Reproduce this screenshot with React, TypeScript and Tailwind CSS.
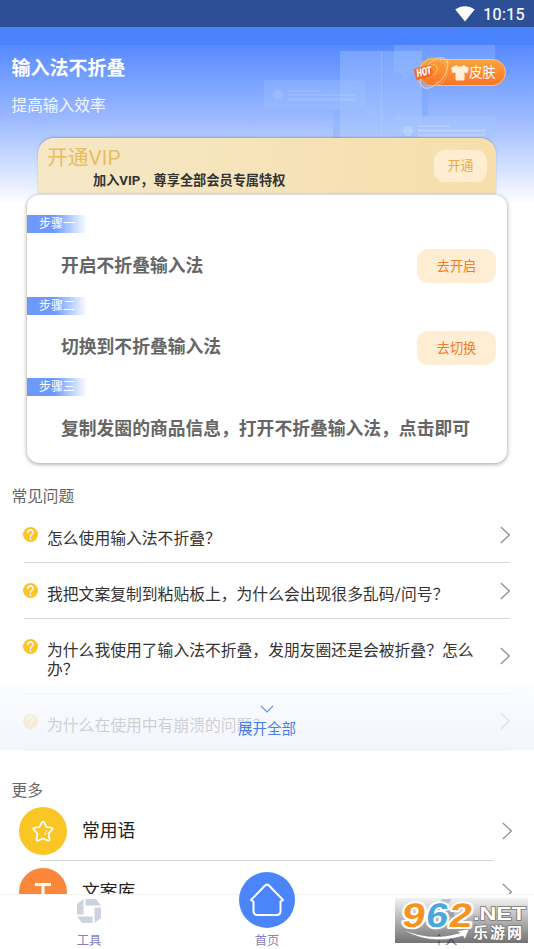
import type { ReactNode } from 'react';

interface Step {
  tag: string;
  title: string;
  action?: string;
}

const steps: Step[] = [
  { tag: '步骤一', title: '开启不折叠输入法', action: '去开启' },
  { tag: '步骤二', title: '切换到不折叠输入法', action: '去切换' },
  { tag: '步骤三', title: '复制发圈的商品信息，打开不折叠输入法，点击即可' },
];

const questions = [
  '怎么使用输入法不折叠？',
  '我把文案复制到粘贴板上，为什么会出现很多乱码/问号？',
  '为什么我使用了输入法不折叠，发朋友圈还是会被折叠？怎么办？',
  '为什么在使用中有崩溃的问题？',
];

function Chevron() {
  return (
    <svg className="w-[10px] h-[18px] shrink-0" viewBox="0 0 10 18" fill="none" stroke="#8c8c8c" strokeWidth={1.2}>
      <path d="M0.800 1l8.500 8-8.500 8" />
    </svg>
  );
}

function StatusBar() {
  return (
    <div className="h-[27px] bg-[#2d4f96] flex items-center justify-end pr-[9px] gap-[8px]">
      <svg className="w-[20px] h-[16px]" viewBox="0 0 20 16" fill="white">
        <path d="M0.3 3.6C6-1 14-1 19.7 3.6L10 15.6z" />
      </svg>
      <span className="text-white text-[16px] leading-[18px] tracking-[0.4px] pt-[2px] [-webkit-text-stroke:0.2px_white]">
        10:15
      </span>
    </div>
  );
}

function HeaderArt() {
  return (
    <svg className="absolute left-[260px] top-0 w-[240px] h-[94px]" viewBox="260 45 240 94">
      <path d="M333 109h7v30h-7z" fill="#8ab4ff" opacity={0.6} />
      <path d="M422 90h6v26h-6z" fill="#79a8ff" opacity={0.5} />
      <path d="M340 51h82v88h-82z" fill="#a5c6ff" opacity={0.4} />
      <path d="M381 51h1v88h-1z" fill="#c0d5ff" opacity={0.3} />
      <rect x="264" y="80" width="101" height="29" rx="2" fill="#9ec2ff" opacity={0.36} />
      <path d="M362 109l14 7v-7z" fill="#9ec2ff" opacity={0.25} />
      <path d="M394 45h101v28h-82l-10 7v-7h-9z" fill="#9ec2ff" opacity={0.3} />
      <rect x="394" y="116" width="101" height="26" rx="2" fill="#a2c5ff" opacity={0.5} />
      <g fill="#c3d7ff" opacity={0.22}>
        <circle cx="278" cy="95" r="5" />
        <path d="M288 90h32v2h-32zM288 94h68v2h-68zM288 98h68v3h-68z" />
      </g>
      <g fill="#cfdfff" opacity={0.4}>
        <circle cx="408" cy="131" r="5" />
        <path d="M418 125h32v2h-32zM418 129h68v3h-68zM418 134h68v3h-68z" />
      </g>
    </svg>
  );
}

function SkinButton() {
  return (
    <div className="absolute left-[413px] top-[11px] w-[94px] h-[34px]">
      <svg className="absolute inset-0 w-[94px] h-[34px]" viewBox="413 56 94 34" fill="none">
        <defs>
          <linearGradient id="pill" x1="0" y1="0" x2="0" y2="1">
            <stop offset="0" stopColor="#fca43c" />
            <stop offset="1" stopColor="#f97428" />
          </linearGradient>
        </defs>
        <rect x="421.5" y="59.5" width="84" height="26" rx="13" fill="url(#pill)" stroke="#ffc28a" />
        <circle cx="433" cy="72" r="14" fill="url(#pill)" stroke="#ffc070" strokeWidth={0.6} />
        <ellipse cx="434" cy="73" rx="18" ry="10" transform="rotate(-50 434 73)" stroke="#ffd3a0" strokeWidth={0.8} />
        <ellipse cx="432" cy="72" rx="17" ry="12" transform="rotate(-38 432 72)" stroke="#ffc987" strokeWidth={0.4} />
        <circle cx="447.500" cy="62" r="1" fill="#ffd9ae" />
        <path d="M431 64.500l4 0.500 2.500 4-2.500 5-3.500 1z" fill="#f98a2c" stroke="#ffd071" strokeWidth={0.8} />
        <path d="M413.500 69l17.500-4.500 2 10.500-16.500 5.500z" fill="#f46b2a" />
        <path d="M456.500 65c2 2 5 2 7 0l5.500 3-1.500 5-3-0.500V79q0 1.500-1.500 1.500h-6q-1.500 0-1.500-1.500v-6.500l-3 0.500-1.500-5z" fill="#fff0dc" />
      </svg>
      <span className="absolute left-[4px] top-[13px] text-white text-[11px] leading-[10px] font-black italic -rotate-12 scale-x-[0.7] origin-left whitespace-nowrap">
        HOT
      </span>
      <span className="absolute left-[56px] top-[8px] text-white text-[13.300px] leading-[18px]">皮肤</span>
    </div>
  );
}

function VipBanner() {
  return (
    <div className="relative mx-[38px] mt-[21px] h-[56px] rounded-t-[16px] bg-linear-to-r from-[#f5e8c7] to-[#f7deab] shadow-[0_-1px_2px_rgba(90,90,110,0.35)] flex items-start justify-between">
      <div className="pl-[9px] pt-[8px]">
        <div className="text-[20.800px] leading-[24px] text-[#e9bd60]">开通VIP</div>
        <div className="pl-[46px] pt-[1px] text-[13.200px] leading-[19px] font-bold text-[#333] whitespace-nowrap">
          加入VIP，尊享全部会员专属特权
        </div>
      </div>
      <button className="mt-[12px] mr-[9px] w-[53px] h-[32px] rounded-[11px] bg-[#feedd0] text-[13px] text-[#eeab45]">
        开通
      </button>
    </div>
  );
}

function StepsCard() {
  return (
    <div className="relative mx-[27px] w-[480px] h-[268px] pt-[20px] rounded-[12px] bg-white shadow-[0_1px_4px_rgba(0,0,0,0.4)]">
      {steps.map((step) => (
        <div key={step.tag} className="h-[81.700px]">
          <div className="w-[60px] h-[18px] pl-[12px] bg-linear-to-r from-[#6d99fb] from-45% to-white text-white text-[12px] leading-[18px]">
            {step.tag}
          </div>
          <div className="mt-[16px] h-[34px] pl-[34px] pr-[11px] flex items-center justify-between">
            <span className="text-[17.800px] leading-[24px] font-bold text-[#666] whitespace-nowrap -mt-[1px]">{step.title}</span>
            {step.action && (
              <button className="w-[79px] h-[34px] pt-[2px] rounded-[11px] bg-[#ffeed4] text-[13.200px] text-[#f07c25]">
                {step.action}
              </button>
            )}
          </div>
        </div>
      ))}
    </div>
  );
}

function QuestionIcon() {
  return (
    <svg className="self-start -ml-[1px] -mt-[3px] w-[15px] h-[15px] shrink-0" viewBox="0 0 15 15" fill="none">
      <circle cx="7.500" cy="7.500" r="7.500" fill="#fac42b" />
      <path d="M4.800 5.800C4.800 2 10.300 2.200 10.200 5.600 10.100 7.300 7.500 7.400 7.500 9.600" stroke="white" strokeWidth={1.400} strokeLinecap="round" />
      <circle cx="7.500" cy="11.900" r="0.900" fill="white" />
    </svg>
  );
}

function Faq() {
  return (
    <div className="relative">
      <div className="pl-[24px] pr-[24px]">
        {questions.map((question) => (
          <div key={question} className="pt-[23px] pb-[13.500px] border-b border-[#d8d8d8] flex items-center">
            <QuestionIcon />
            <p className="flex-1 pl-[9px] pr-[25px] text-[15.800px] leading-[18.500px] text-[#333]">{question}</p>
            <div className="-mt-[9px]">
              <Chevron />
            </div>
          </div>
        ))}
      </div>

      {/* Fade over the last question */}
      <div className="absolute left-0 right-0 bottom-0 h-[59px] bg-linear-to-b from-[#f9fbff]/80 to-[#eff3fc]/80 flex flex-col items-center pt-[14px]">
        <svg className="w-[14px] h-[9px]" viewBox="0 0 14 9" fill="none" stroke="#5f95ef" strokeWidth={1.1}>
          <path d="M1 1l6 6 6-6" />
        </svg>
        <span className="mt-[7px] text-[14.500px] leading-[18px] text-[#477eea]">展开全部</span>
      </div>
      <div className="absolute left-0 right-0 bottom-[59px] h-[10px] bg-linear-to-b from-transparent to-[#fafcff]" />
    </div>
  );
}

interface MoreItemProps {
  label: string;
  color: string;
  icon: ReactNode;
}

function MoreItem({ label, color, icon }: MoreItemProps) {
  return (
    <div className="h-[60px] pl-[19px] pr-[22px] flex items-start">
      <div className={`w-[48px] h-[48px] shrink-0 rounded-full flex items-center justify-center ${color}`}>{icon}</div>
      <div className="h-[48px] flex-1 pl-[15px] flex items-center justify-between">
        <span className="pt-[1px] text-[17.800px] leading-[24px] text-[#222]">{label}</span>
        <Chevron />
      </div>
    </div>
  );
}

function Watermark() {
  return (
    <div className="absolute left-[395px] top-[3px] w-[133px] h-[45px] bg-linear-to-b from-black/5 to-black/55">
      <svg className="w-[133px] h-[45px]" viewBox="0 0 133 45">
        <g fontFamily="Liberation Sans" fontWeight="bold" fontSize="34" strokeLinejoin="round" transform="skewX(-8)">
          <g stroke="white" strokeWidth={4} fill="white" aria-hidden="true">
            <text x="10" y="29" textLength="23" lengthAdjust="spacingAndGlyphs" fill="#f7931e" stroke="white" paintOrder="stroke">9</text>
            <text x="34" y="29" textLength="22" lengthAdjust="spacingAndGlyphs" fill="#4aa8df" stroke="white" paintOrder="stroke">6</text>
            <text x="57" y="29" textLength="23" lengthAdjust="spacingAndGlyphs" fill="#f7931e" stroke="white" paintOrder="stroke">2</text>
          </g>
        </g>
        <path d="M7 31q28 13 58 4l-3-2 12-2-4 10-2-3Q34 48 7 31z" fill="white" stroke="#888" strokeWidth={0.5} />
        <g fill="white" stroke="#777" strokeWidth={1.500} paintOrder="stroke" fontWeight="bold">
          <text x="78" y="22" fontSize="19" textLength="53" lengthAdjust="spacingAndGlyphs" fontFamily="Liberation Sans">.NET</text>
          <text x="78" y="40" fontSize="15" textLength="49" fontFamily="Noto Sans CJK SC">乐游网</text>
        </g>
      </svg>
    </div>
  );
}

function BottomNav() {
  return (
    <div className="absolute left-0 right-0 bottom-0 h-[55px] bg-white border-t border-[#f3f3f3] text-[12.300px] leading-[16px] text-[#8581bd]">
      <div className="grid grid-cols-3 h-full">
        <div className="flex flex-col items-center pt-[4px]">
          <svg className="w-[24px] h-[24px]" viewBox="0 0 24 24" fill="#ccd2df">
            <path d="M8.500 0H19l5 6.500H8.500zM24 8.500V19l-6.500 5V8.500zM15.500 24H5l-5-6.500h15.500zM0 15.500V5l6.500-5v15.500z" />
          </svg>
          <span className="mt-[10px]">工具</span>
        </div>
        <div className="flex flex-col items-center">
          <div className="-mt-[23px] w-[56px] h-[56px] shrink-0 rounded-full bg-[#4b85fb] flex items-center justify-center">
            <svg className="w-[34px] h-[34px]" viewBox="0 0 34 34" fill="none" stroke="white" strokeWidth={2} strokeLinejoin="round" strokeLinecap="round">
              <path d="M1 17L15 2.500q2-1.800 4 0L33 17l-2.500 1.500V28q0 4-4 4h-19q-4 0-4-4v-9.500z" />
            </svg>
          </div>
          <span className="mt-[5px]">首页</span>
        </div>
        <div className="flex flex-col items-center pt-[4px]">
          <svg className="w-[24px] h-[24px]" viewBox="0 0 24 24" fill="#ccd2df">
            <path d="M9 0h10l-5 6H4zM3 8h18v10H3z" />
          </svg>
          <span className="mt-[10px]">个人</span>
        </div>
      </div>
      <Watermark />
    </div>
  );
}

export default function App() {
  return (
    <div className="relative w-[534px] h-[949px] overflow-hidden bg-white font-[Roboto,'Noto_Sans_CJK_SC',sans-serif]">
      <StatusBar />
      <div className="h-[18px] bg-[#4b83fe]" />

      {/* Header, its gradient runs on a little behind the steps card */}
      <div className="relative h-[160px] -mb-[10px] bg-linear-to-b from-[#578afe] via-[#9ab8ff] via-45% to-white">
        <HeaderArt />
        <div className="relative pl-[11.500px] pt-[12px] text-white">
          <h1 className="text-[19px] leading-[24px] font-bold">输入法不折叠</h1>
          <p className="mt-[14px] mb-px text-[15.700px] leading-[22px] text-white/90">提高输入效率</p>
        </div>
        <SkinButton />
        <VipBanner />
      </div>

      <StepsCard />

      <h2 className="mt-[24px] pl-[11.500px] text-[15.700px] leading-[20px] text-[#666]">常见问题</h2>
      <Faq />

      <h2 className="mt-[31px] pl-[11.500px] text-[15.700px] leading-[20px] text-[#666]">更多</h2>
      <div className="mt-[6px]">
        <MoreItem
          label="常用语"
          color="bg-[#fac626]"
          icon={
            <svg className="w-[22px] h-[22px]" viewBox="0 0 22 22" fill="none" stroke="white" strokeWidth={1.700} strokeLinejoin="round" strokeLinecap="round">
              <path d="M9.900 2.300q1.100-1.500 2.200 0l2.400 4.700 5.300 0.800q1.500 0.500 0.600 1.700l-3.900 4.200 1 6q-0.200 1.500-1.700 0.900L11 18.400l-4.800 2.200q-1.500 0.600-1.700-0.900l1-6-3.900-4.200q-0.900-1.200 0.600-1.700l5.300-0.800z" />
              <path d="M15 10.500l-1.500 1.300-0.500 3" strokeWidth={1} />
            </svg>
          }
        />
        <div className="-mt-[7px] mb-[7px] ml-[40px] mr-[40px] h-px bg-[#d4d4d4]" />
        <MoreItem
          label="文案库"
          color="bg-[#fb873a]"
          icon={
            <svg className="w-[18px] h-[18px]" viewBox="0 0 18 18" fill="none" stroke="white" strokeWidth={3}>
              <path d="M1 1.500h16M9 1.500V17" />
            </svg>
          }
        />
      </div>

      <BottomNav />
    </div>
  );
}
